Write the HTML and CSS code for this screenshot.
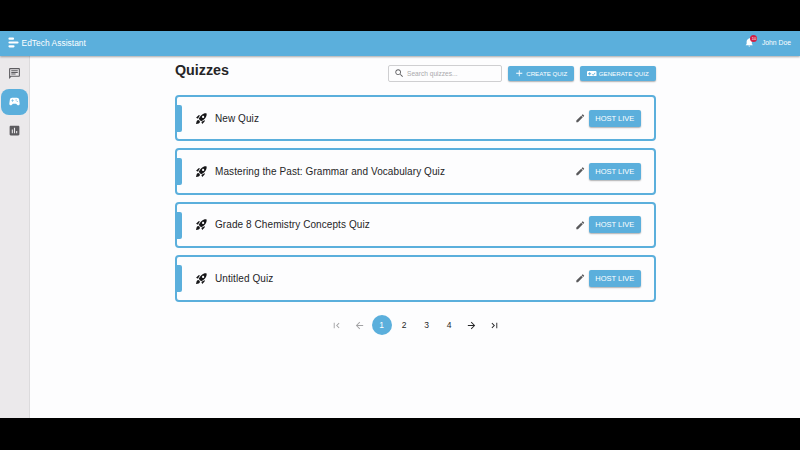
FILE: index.html
```html
<!DOCTYPE html>
<html lang="en">
<head>
<meta charset="utf-8">
<title>EdTech Assistant</title>
<link rel="stylesheet" href="styles.css">
</head>
<body>
<div class="app">
  <header class="topbar">
    <svg class="logo" viewBox="0 0 11 11"><path d="M1.500 1.700H5M1.500 5.500H9.500M1.500 9.300H5.500" stroke="#fff" stroke-width="2.200" stroke-linecap="round"/></svg>
    <span class="brand">EdTech Assistant</span>
    <div class="bell">
      <svg viewBox="0 0 24 24"><path d="M12 22c1.1 0 2-.9 2-2h-4c0 1.1.89 2 2 2zm6-6v-5c0-3.07-1.64-5.64-4.5-6.32V4c0-.83-.67-1.5-1.5-1.5s-1.5.67-1.5 1.5v.68C7.63 5.36 6 7.92 6 11v5l-2 2v1h16v-1l-2-2z"/></svg>
      <span class="badge">10</span>
    </div>
    <span class="user">John Doe</span>
  </header>
  <div class="body">
    <nav class="sidebar">
      <a class="nav"><svg viewBox="0 0 24 24"><path d="M4 4h16v12H5.17L4 17.17V4m0-2c-1.1 0-1.99.9-1.99 2L2 22l4-4h14c1.1 0 2-.9 2-2V4c0-1.1-.9-2-2-2H4zm2 10h8v2H6v-2zm0-3h12v2H6V9zm0-3h12v2H6V6z"/></svg></a>
      <a class="nav active"><svg viewBox="0 0 24 24"><path d="M21.58 16.09l-1.09-7.66C20.21 6.46 18.52 5 16.53 5H7.47C5.48 5 3.79 6.46 3.51 8.43l-1.09 7.66C2.2 17.63 3.39 19 4.94 19c.68 0 1.32-.27 1.8-.75L9 16h6l2.25 2.25c.48.48 1.13.75 1.8.75 1.56 0 2.75-1.37 2.53-2.91zM11 11H9v2H8v-2H6v-1h2V8h1v2h2v1zm4-1c-.55 0-1-.45-1-1s.45-1 1-1 1 .45 1 1-.45 1-1 1zm2 3c-.55 0-1-.45-1-1s.45-1 1-1 1 .45 1 1-.45 1-1 1z"/></svg></a>
      <a class="nav"><svg viewBox="0 0 24 24"><path d="M19 3H5c-1.1 0-2 .9-2 2v14c0 1.1.9 2 2 2h14c1.1 0 2-.9 2-2V5c0-1.1-.9-2-2-2zM9 17H7v-7h2v7zm4 0h-2V7h2v10zm4 0h-2v-4h2v4z"/></svg></a>
    </nav>
    <main class="main">
      <div class="head">
        <h1>Quizzes</h1>
        <div class="search">
          <svg viewBox="0 0 24 24"><path d="M15.5 14h-.79l-.28-.27C15.41 12.59 16 11.11 16 9.5 16 5.91 13.09 3 9.5 3S3 5.91 3 9.5 5.91 16 9.5 16c1.61 0 3.09-.59 4.23-1.57l.27.28v.79l5 4.99L20.49 19l-4.99-5zm-6 0C7.01 14 5 11.99 5 9.5S7.01 5 9.5 5 14 7.01 14 9.5 11.99 14 9.5 14z"/></svg>
          <span>Search quizzes...</span>
        </div>
        <button class="btn create"><svg viewBox="0 0 24 24"><path d="M19 13h-6v6h-2v-6H5v-2h6V5h2v6h6v2z"/></svg><span>CREATE QUIZ</span></button>
        <button class="btn generate"><svg viewBox="0 0 20 12"><path fill-rule="evenodd" d="M2 0h16a2 2 0 0 1 2 2v8a2 2 0 0 1-2 2H2a2 2 0 0 1-2-2V2a2 2 0 0 1 2-2zM4.5 2.5v2.3H2.2v2h2.3v2.4h2V6.800h2.300v-2H6.500V2.500zM11.500 6.500l-1 1 2.500 2.500 5-6-1.200-1-3.900 4.700z"/></svg><span>GENERATE QUIZ</span></button>
      </div>
      <div class="list">
        <article class="card"><i class="tab"></i><svg class="rocket" viewBox="0 0 24 24"><use href="#rocket"/></svg><span class="name">New Quiz</span><svg class="edit" viewBox="0 0 24 24"><use href="#pencil"/></svg><button class="host">HOST LIVE</button></article>
        <article class="card"><i class="tab"></i><svg class="rocket" viewBox="0 0 24 24"><use href="#rocket"/></svg><span class="name">Mastering the Past: Grammar and Vocabulary Quiz</span><svg class="edit" viewBox="0 0 24 24"><use href="#pencil"/></svg><button class="host">HOST LIVE</button></article>
        <article class="card"><i class="tab"></i><svg class="rocket" viewBox="0 0 24 24"><use href="#rocket"/></svg><span class="name">Grade 8 Chemistry Concepts Quiz</span><svg class="edit" viewBox="0 0 24 24"><use href="#pencil"/></svg><button class="host">HOST LIVE</button></article>
        <article class="card"><i class="tab"></i><svg class="rocket" viewBox="0 0 24 24"><use href="#rocket"/></svg><span class="name">Untitled Quiz</span><svg class="edit" viewBox="0 0 24 24"><use href="#pencil"/></svg><button class="host">HOST LIVE</button></article>
      </div>
      <div class="pager">
        <span class="page off"><svg viewBox="0 0 24 24"><path d="M18.410 16.590L13.820 12l4.590-4.590L17 6l-6 6 6 6zM6 6h2v12H6z"/></svg></span>
        <span class="page off"><svg viewBox="0 0 24 24"><path d="M20 11H7.830l5.590-5.590L12 4l-8 8 8 8 1.410-1.410L7.830 13H20v-2z"/></svg></span>
        <span class="page current">1</span>
        <span class="page">2</span>
        <span class="page">3</span>
        <span class="page">4</span>
        <span class="page"><svg viewBox="0 0 24 24"><path d="M12 4l-1.410 1.410L16.170 11H4v2h12.170l-5.580 5.590L12 20l8-8z"/></svg></span>
        <span class="page"><svg viewBox="0 0 24 24"><path d="M5.590 7.410L10.180 12l-4.590 4.590L7 18l6-6-6-6zM16 6h2v12h-2z"/></svg></span>
      </div>
    </main>
  </div>
</div>
<svg class="defs">
  <defs>
    <path id="rocket" d="M9.190 6.350c-2.040 2.290-3.440 5.580-3.570 5.890L2 10.690l4.050-4.050c.47-.47 1.150-.68 1.810-.55l1.330.26zM11.170 17s3.740-1.550 5.890-3.700c5.400-5.400 4.500-9.620 4.210-10.570-.95-.3-5.170-1.190-10.570 4.210C8.550 9.090 7 12.830 7 12.830L11.170 17zm6.480-2.190c-2.290 2.040-5.580 3.440-5.890 3.570L13.310 22l4.050-4.050c.47-.47.68-1.150.55-1.810l-.26-1.330zM9 18c0 .83-.34 1.580-.88 2.120C6.940 21.300 2 22 2 22s.7-4.940 1.880-6.120A2.996 2.996 0 0 1 9 18zm4-9c0-1.100.9-2 2-2s2 .9 2 2-.9 2-2 2-2-.9-2-2z"/>
    <path id="pencil" d="M3 17.250V21h3.750L17.810 9.940l-3.750-3.750L3 17.250zM20.710 7.040c.39-.39.39-1.020 0-1.410l-2.340-2.340a.9959.9959 0 0 0-1.410 0l-1.830 1.830 3.750 3.750 1.830-1.830z"/>
  </defs>
</svg>
</body>
</html>
```
FILE: styles.css
```css
* { box-sizing: border-box; }
body {
  margin: 0;
  padding: 31px 0 32px;
  height: 450px;
  overflow: hidden;
  background: #000;
  font-family: "Liberation Sans", Arial, sans-serif;
  color: #252527;
}
svg { display: block; flex: none; fill: currentColor; }
.defs { display: none; }
.app { height: 387px; display: flex; flex-direction: column; background: #fdfdfe; }

.topbar {
  height: 25px;
  flex: none;
  display: flex;
  align-items: center;
  padding: 0 9px 2px 8px;
  background: #5bafdc;
  color: #fff;
  box-shadow: 0 1px 2px rgba(0, 0, 0, .35);
  z-index: 1;
}
.logo { width: 11px; height: 11px; margin-right: 2.500px; }
.brand { font-size: 8.400px; letter-spacing: .04px; }
.bell { position: relative; margin-left: auto; margin-right: 7px; }
.bell svg { width: 10.500px; height: 10.500px; }
.badge {
  position: absolute;
  left: 6px;
  top: -2.500px;
  width: 7px;
  height: 7px;
  border-radius: 50%;
  background: #d32045;
  font-size: 4px;
  line-height: 7px;
  text-align: center;
}
.user { font-size: 6.800px; }

.body { flex: 1; display: flex; min-height: 0; }
.sidebar {
  width: 30px;
  padding-top: 4px;
  display: flex;
  flex-direction: column;
  align-items: center;
  gap: 2px;
  background: #ebe9eb;
  border-right: 1px solid #dcdbdd;
}
.nav {
  width: 27px;
  height: 26.500px;
  display: grid;
  place-items: center;
  border-radius: 8px;
  color: #5d5c60;
}
.nav svg { width: 13px; height: 13px; }
.nav.active { background: #5bafdc; color: #fff; }

.main { width: 481px; margin-left: 145px; }
.head { display: flex; height: 39px; padding-top: 9px; }
h1 { margin: -4px 0 0; width: 212.500px; font-size: 14.300px; line-height: 18px; }
.search {
  width: 114px;
  height: 17px;
  margin-right: 6px;
  padding-left: 5px;
  display: flex;
  align-items: center;
  gap: 3px;
  border: 1px solid #cfcfd1;
  border-radius: 2px;
  font-size: 6.600px;
  color: #a9a9ac;
}
.search svg { width: 10.500px; height: 10.500px; color: #5b5b5e; }
.btn, .host {
  padding: 0;
  border: 0;
  border-radius: 2px;
  background: #5bafdc;
  color: #fff;
  font-family: inherit;
  box-shadow: 0 1px 1.500px rgba(0, 0, 0, .3);
}
.btn {
  width: 66px;
  height: 15px;
  margin: 0 6.500px 0 0;
  padding-top: 1px;
  display: flex;
  align-items: center;
  justify-content: center;
  gap: 2px;
  font-size: 6.200px;
  margin-top: .5px;
}
.create svg { width: 10.500px; height: 10.500px; }
.generate { width: 76px; margin-right: 0; }
.generate svg { width: 9.500px; height: 5.700px; }

.list { display: grid; gap: 7px; }
.card {
  position: relative;
  height: 46.400px;
  display: flex;
  align-items: center;
  padding: 0 13px 0 18px;
  border: 2px solid #5bafdc;
  border-radius: 4px;
}
.tab {
  position: absolute;
  left: -1px;
  top: 8px;
  width: 6px;
  height: 27px;
  background: #5bafdc;
  border-radius: 0 2px 2px 0;
}
.rocket { width: 13px; height: 13px; margin-right: 7px; color: #151517; }
.name { font-size: 10px; letter-spacing: .08px; }
.edit { width: 10.500px; height: 10.500px; margin-left: auto; margin-right: 3.500px; color: #59595b; }
.host { width: 52.500px; height: 17px; font-size: 7.500px; }

.pager { display: flex; gap: 2.500px; margin: 13.500px 0 0 151.500px; }
.page {
  width: 20px;
  height: 20px;
  display: grid;
  place-items: center;
  border-radius: 50%;
  font-size: 8.500px;
}
.page svg { width: 11px; height: 11px; }
.off { color: #a2a2a4; }
.current { background: #5bafdc; color: #fff; }
```
